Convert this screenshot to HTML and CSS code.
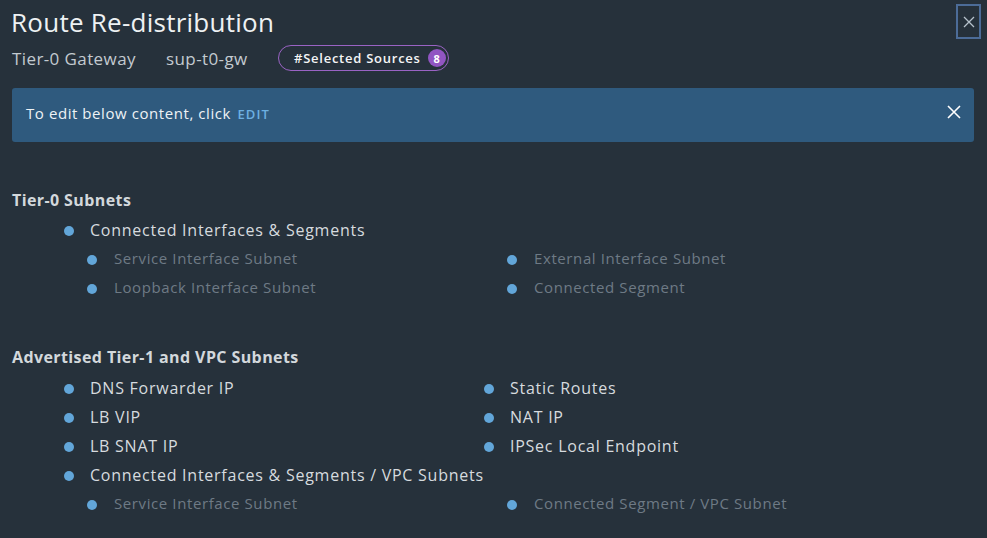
FILE: index.html
```html
<!DOCTYPE html>
<html>
<head>
<meta charset="utf-8">
<link rel="stylesheet" href="styles.css">
</head>
<body>
<div class="modal">
  <header class="head">
    <div class="head-main">
      <h1 class="title">Route Re-distribution</h1>
      <div class="meta">
        <span class="meta-label">Tier-0 Gateway</span>
        <span class="meta-value">sup-t0-gw</span>
        <span class="pill">#Selected Sources <span class="badge">8</span></span>
      </div>
    </div>
    <button class="close" aria-label="Close">
      <svg width="12" height="12" viewBox="0 0 12 12"><path d="M1 1L11 11M11 1L1 11" stroke="#b7c2cc" stroke-width="1.3" fill="none"/></svg>
    </button>
  </header>

  <div class="alert">
    <span class="alert-text">To edit below content, click <span class="edit">EDIT</span></span>
    <svg class="alert-close" width="14" height="14" viewBox="0 0 14 14"><path d="M1 1L13 13M13 1L1 13" stroke="#ffffff" stroke-width="1.6" fill="none"/></svg>
  </div>

  <section class="group">
    <h2 class="group-title">Tier-0 Subnets</h2>
    <ul class="list">
      <li class="item full">Connected Interfaces &amp; Segments</li>
    </ul>
    <ul class="list sub">
      <li class="item">Service Interface Subnet</li>
      <li class="item">External Interface Subnet</li>
      <li class="item">Loopback Interface Subnet</li>
      <li class="item">Connected Segment</li>
    </ul>
  </section>

  <section class="group second">
    <h2 class="group-title">Advertised Tier-1 and VPC Subnets</h2>
    <ul class="list">
      <li class="item">DNS Forwarder IP</li>
      <li class="item">Static Routes</li>
      <li class="item">LB VIP</li>
      <li class="item">NAT IP</li>
      <li class="item">LB SNAT IP</li>
      <li class="item">IPSec Local Endpoint</li>
      <li class="item full">Connected Interfaces &amp; Segments / VPC Subnets</li>
    </ul>
    <ul class="list sub">
      <li class="item">Service Interface Subnet</li>
      <li class="item">Connected Segment / VPC Subnet</li>
    </ul>
  </section>
</div>
</body>
</html>
```
FILE: styles.css
```css
* { box-sizing: border-box; }
html, body {
  margin: 0;
  padding: 0;
  background: #26313b;
  font-family: "Open Sans", "Liberation Sans", sans-serif;
  color: #dfe3e6;
  overflow: hidden;
}
.modal {
  width: 987px;
  height: 538px;
  padding: 0 13px 0 12px;
}
.head {
  display: flex;
  justify-content: space-between;
  align-items: flex-start;
}
.head-main { padding-top: 4px; }
.title {
  margin: 0;
  font-size: 26px;
  font-weight: 400;
  letter-spacing: 0.25px;
  line-height: 36px;
  color: #eef1f3;
  margin-left: -1px;
}
.meta {
  display: flex;
  align-items: center;
  height: 30px;
  margin-top: 3px;
  font-size: 17px;
  letter-spacing: 0.4px;
  color: #c3cad0;
}
.meta-label { width: 154px; }
.meta-value { width: 112px; }
.pill {
  display: inline-flex;
  align-items: center;
  height: 26px;
  padding: 0 2px 0 15px;
  border: 1px solid #9a63c4;
  border-radius: 13px;
  font-size: 13px;
  font-weight: 600;
  letter-spacing: 0.75px;
  color: #f4f5f6;
}
.badge {
  display: inline-flex;
  justify-content: center;
  align-items: center;
  width: 18px;
  height: 18px;
  margin-left: 7px;
  border-radius: 50%;
  background: #9155c2;
  font-size: 11px;
  font-weight: 700;
  letter-spacing: 0;
  color: #fff;
}
.close {
  width: 25px;
  height: 35px;
  margin-top: 4px;
  margin-right: -7px;
  padding: 0;
  display: flex;
  justify-content: center;
  align-items: center;
  background: transparent;
  border: 2px solid #4c6c98;
}
.alert {
  margin-top: 15px;
  height: 54px;
  display: flex;
  justify-content: space-between;
  align-items: center;
  padding: 0 13px 4px 14px;
  background: #2f5a7e;
  border-radius: 3px;
}
.alert-text { font-size: 15px; letter-spacing: 0.57px; color: #eef2f5; }
.edit {
  margin-left: 2px;
  font-size: 13px;
  font-weight: 600;
  letter-spacing: 1.1px;
  color: #6db0e2;
}
.alert-close { margin-bottom: 2px; }
.group { margin-top: 48px; }
.group.second { margin-top: 42px; }
.group-title {
  margin: 0;
  font-size: 16px;
  font-weight: 700;
  letter-spacing: 0.4px;
  line-height: 20px;
  color: #d3d8dc;
}
.list {
  list-style: none;
  margin: 0;
  padding: 0 0 0 50px;
  display: grid;
  grid-template-columns: 420px 420px;
  margin-top: 9px;
}
.group.second .list { margin-top: 10px; }
.item {
  position: relative;
  padding-left: 28px;
  height: 29px;
  line-height: 22px;
  font-size: 16px;
  letter-spacing: 0.75px;
  color: #d6dbdf;
}
.item::before {
  content: "";
  position: absolute;
  left: 2px;
  top: 7px;
  width: 10px;
  height: 10px;
  border-radius: 50%;
  background: #62a6d9;
}
.item.full { grid-column: 1 / span 2; }
.list.sub,
.group.second .list.sub {
  margin-top: -1px;
  padding-left: 73px;
}
.list.sub .item {
  font-size: 15px;
  letter-spacing: 0.6px;
  padding-left: 29px;
  color: #6e7a85;
}
.list.sub .item::before { top: 8px; }
```
